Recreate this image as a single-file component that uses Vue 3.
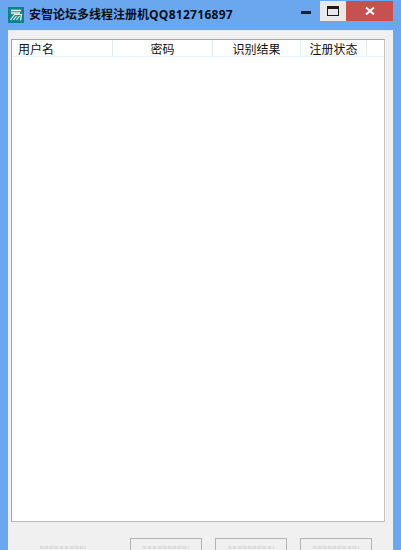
<script setup>
const columns = [
  { label: '用户名', width: 101, align: 'left' },
  { label: '密码', width: 100, align: 'center' },
  { label: '识别结果', width: 88, align: 'center' },
  { label: '注册状态', width: 66, align: 'center' },
]
const buttons = [1, 2, 3]
</script>

<template>
  <div class="window">
    <header class="titlebar">
      <svg class="logo" viewBox="0 0 16 16" width="16" height="16">
        <rect x="0" y="0" width="16" height="16" fill="#0f7f86" />
        <rect x="1.5" y="1.5" width="13" height="13" fill="#12898f" />
        <path d="M3 3.5h10M3 6h9" stroke="#e8f6f2" stroke-width="1.3" fill="none" />
        <path d="M2.5 13l4-5.5h7l-1 6M5.5 13l3-4M8.5 13l3-4" stroke="#e8f6f2" stroke-width="1.2" fill="none" />
      </svg>
      <span class="title">安智论坛多线程注册机<span class="title-num">QQ812716897</span></span>
      <div class="controls">
        <span class="minimize"><i></i></span>
        <span class="maximize"><i></i></span>
        <span class="close">
          <svg viewBox="0 0 10 10" width="10" height="10">
            <path d="M1 1.5l8 7M9 1.5l-8 7" stroke="#fff" stroke-width="2" fill="none" />
          </svg>
        </span>
      </div>
    </header>
    <main class="client">
      <section class="list">
        <div class="list-head">
          <div
            v-for="col in columns"
            :key="col.label"
            class="col"
            :class="col.align"
            :style="{ width: col.width + 'px' }"
          >{{ col.label }}</div>
        </div>
      </section>
      <footer class="actions">
        <span class="clipped label"></span>
        <div v-for="b in buttons" :key="b" class="btn"><span class="clipped"></span></div>
      </footer>
    </main>
  </div>
</template>

<style scoped>
.window {
  width: 401px;
  height: 550px;
  overflow: hidden;
  background: #6ba7ee;
  display: flex;
  flex-direction: column;
  font-family: "Noto Sans CJK SC", "Liberation Sans", sans-serif;
  padding: 0 8px;
  box-sizing: border-box;
}
.titlebar {
  height: 30px;
  flex: none;
  display: flex;
  align-items: flex-start;
}
.logo {
  margin-top: 7px;
  flex: none;
}
.title {
  margin-left: 5px;
  margin-top: 6px;
  font-size: 12px;
  line-height: 18px;
  font-weight: 700;
  color: #06101c;
  white-space: nowrap;
  font-family: "Open Sans", "Noto Sans CJK SC", sans-serif;
}
.title-num {
  letter-spacing: 0.28px;
}
.controls {
  margin-left: auto;
  padding-top: 1px;
  display: flex;
  align-items: flex-start;
}
.controls span {
  display: flex;
  align-items: center;
  justify-content: center;
  height: 20px;
}
.minimize {
  width: 28px;
}
.minimize i {
  display: block;
  width: 10px;
  height: 3px;
  margin-top: 3px;
  background: #0d2238;
}
.maximize {
  width: 26px;
  background: #e9e9e9;
}
.maximize i {
  display: block;
  width: 10px;
  height: 6px;
  border: 1px solid #1a1a1a;
  border-top-width: 3px;
}
.close {
  width: 47px;
  background: #c75050;
}
.client {
  flex: 1;
  min-height: 0;
  background: #f0f0f0;
  border-top: 1px solid #e4eefb;
  padding: 8px 8px 0 3px;
  display: flex;
  flex-direction: column;
}
.list {
  height: 483px;
  flex: none;
  background: #fff;
  border: 1px solid #a8a8a8;
  border-right-color: #c4c4c4;
  border-bottom-color: #b8b8b8;
  box-sizing: border-box;
}
.list-head {
  height: 16px;
  display: flex;
  border-bottom: 1px solid #eaf2f8;
  background: #fff;
}
.col {
  box-sizing: border-box;
  font-size: 12px;
  line-height: 18px;
  color: #111;
  border-right: 1px solid #e3ecf4;
  white-space: nowrap;
}
.left {
  padding-left: 6px;
}
.center {
  text-align: center;
}
.actions {
  display: flex;
  align-items: flex-start;
  padding-top: 16px;
}
.btn {
  width: 72px;
  height: 30px;
  flex: none;
  box-sizing: border-box;
  border: 1px solid #b4b4b4;
  background: #f0f0f0;
  margin-left: 13px;
  display: flex;
  justify-content: center;
}
.clipped {
  display: block;
  width: 46px;
  height: 3px;
  margin-top: 7px;
  background: repeating-linear-gradient(90deg, #dcdcdc 0 3px, #e8e8e8 3px 5px);
}
.label {
  width: 46px;
  margin: 8px 0 0 29px;
  flex: none;
}
.label + .btn {
  margin-left: 44px;
}
</style>
